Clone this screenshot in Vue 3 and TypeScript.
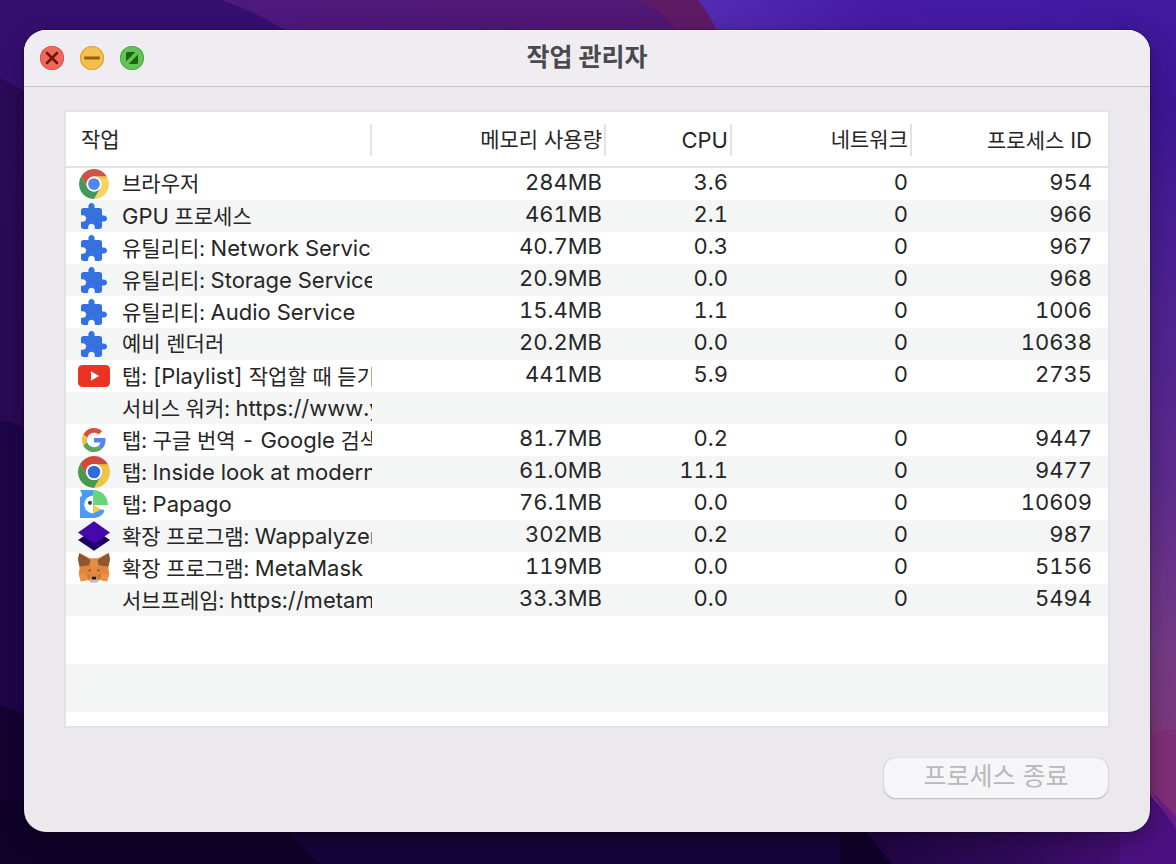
<script setup lang="ts">
type IconName = 'chrome' | 'chromeSite' | 'puzzle' | 'youtube' | 'google' | 'papago' | 'wappalyzer' | 'metamask' | ''

interface Task {
  icon: IconName
  name: string
  memory: string
  cpu: string
  network: string
  pid: string
}

interface Run {
  text: string
  latin: boolean
}

const tasks: Task[] = [
  { icon: 'chrome', name: '브라우저', memory: '284MB', cpu: '3.6', network: '0', pid: '954' },
  { icon: 'puzzle', name: 'GPU 프로세스', memory: '461MB', cpu: '2.1', network: '0', pid: '966' },
  { icon: 'puzzle', name: '유틸리티: Network Service', memory: '40.7MB', cpu: '0.3', network: '0', pid: '967' },
  { icon: 'puzzle', name: '유틸리티: Storage Service', memory: '20.9MB', cpu: '0.0', network: '0', pid: '968' },
  { icon: 'puzzle', name: '유틸리티: Audio Service', memory: '15.4MB', cpu: '1.1', network: '0', pid: '1006' },
  { icon: 'puzzle', name: '예비 렌더러', memory: '20.2MB', cpu: '0.0', network: '0', pid: '10638' },
  { icon: 'youtube', name: '탭: [Playlist] 작업할 때 듣기', memory: '441MB', cpu: '5.9', network: '0', pid: '2735' },
  { icon: '', name: '서비스 워커: https://www.y', memory: '', cpu: '', network: '', pid: '' },
  { icon: 'google', name: '탭: 구글 번역 - Google 검색', memory: '81.7MB', cpu: '0.2', network: '0', pid: '9447' },
  { icon: 'chromeSite', name: '탭: Inside look at modern', memory: '61.0MB', cpu: '11.1', network: '0', pid: '9477' },
  { icon: 'papago', name: '탭: Papago', memory: '76.1MB', cpu: '0.0', network: '0', pid: '10609' },
  { icon: 'wappalyzer', name: '확장 프로그램: Wappalyzer', memory: '302MB', cpu: '0.2', network: '0', pid: '987' },
  { icon: 'metamask', name: '확장 프로그램: MetaMask', memory: '119MB', cpu: '0.0', network: '0', pid: '5156' },
  { icon: '', name: '서브프레임: https://metam', memory: '33.3MB', cpu: '0.0', network: '0', pid: '5494' },
]

// Latin letters are set one step larger than Hangul so both scripts look the same size.
function runs(text: string): Run[] {
  return text
    .split(/([A-Za-z[][A-Za-z:/.\[\] ]*[A-Za-z\]])/)
    .filter((part) => part !== '')
    .map((part) => ({ text: part, latin: /^[A-Za-z[]/.test(part) }))
}
</script>

<template>
  <div class="desktop">
    <svg class="wallpaper" viewBox="0 0 1176 864" preserveAspectRatio="none" aria-hidden="true">
      <defs>
        <linearGradient id="wp-left" x1="0" y1="0" x2="0" y2="1">
          <stop offset="0" stop-color="#2b0a58" />
          <stop offset="1" stop-color="#280853" />
        </linearGradient>
        <linearGradient id="wp-right" x1="0" y1="0" x2="0" y2="1">
          <stop offset="0" stop-color="#4019a0" />
          <stop offset="0.12" stop-color="#3d1594" />
          <stop offset="0.35" stop-color="#4f2290" />
          <stop offset="0.55" stop-color="#5b2b8c" />
          <stop offset="0.75" stop-color="#743a86" />
          <stop offset="0.84" stop-color="#7b387c" />
          <stop offset="1" stop-color="#7b2e72" />
        </linearGradient>
        <linearGradient id="wp-blue" x1="0" y1="0" x2="1" y2="0">
          <stop offset="0" stop-color="#532bb2" />
          <stop offset="0.4" stop-color="#471ba4" />
          <stop offset="1" stop-color="#40199f" />
        </linearGradient>
        <linearGradient id="wp-top" x1="0" y1="0" x2="1" y2="0">
          <stop offset="0" stop-color="#4d197d" />
          <stop offset="1" stop-color="#511872" />
        </linearGradient>
        <linearGradient id="wp-bottom" x1="0" y1="0" x2="1" y2="0">
          <stop offset="0" stop-color="#1d0540" />
          <stop offset="0.5" stop-color="#2f0a57" />
          <stop offset="1" stop-color="#4d1080" />
        </linearGradient>
      </defs>
      <path d="M0 0H1176V864H0Z" fill="url(#wp-left)" />
      <path d="M0 0H320V120L60 110L0 78Z" fill="#350f6f" />
      <path d="M222 0Q260 14 284 30L340 60H700V0Z" fill="url(#wp-top)" />
      <path d="M640 0Q666 14 678 32L740 60V0Z" fill="#5f1a66" />
      <path d="M698 0Q708 12 717 30L740 80H1130V0Z" fill="url(#wp-blue)" />
      <path d="M1110 0H1176V864H1110Z" fill="url(#wp-right)" />
      <path d="M1110 738L1176 729V864H1110Z" fill="#7f2f76" />
      <path d="M0 420L60 436V740H0Z" fill="#1d0548" />
      <path d="M0 705L60 728V864H0Z" fill="#130330" />
      <path d="M0 800H1090V864H0Z" fill="#10032a" />
      <path d="M250 800L320 864H840V800Z" fill="#16043a" />
      <path d="M840 800H1130L1176 840V864H892Z" fill="url(#wp-bottom)" />
      <path d="M1120 760L1176 825V864H1120Z" fill="#4b1080" />
      <path d="M1150 790L1176 816V829Z" fill="#6a1b8a" />
    </svg>

    <main class="window">
      <header class="titlebar">
        <div class="lights">
          <button type="button" class="light red" aria-label="닫기">
            <svg viewBox="0 0 24 24"><path d="M7 7L17 17M17 7L7 17" stroke="#7a120b" stroke-width="2.6" stroke-linecap="round" /></svg>
          </button>
          <button type="button" class="light yellow" aria-label="최소화">
            <svg viewBox="0 0 24 24"><path d="M5.4 12H18.6" stroke="#955f12" stroke-width="2.8" stroke-linecap="round" /></svg>
          </button>
          <button type="button" class="light green" aria-label="확대">
            <svg viewBox="0 0 24 24">
              <path d="M6 15.4V7.5Q6 6 7.5 6H15.4ZM8.6 18L18 8.6V16.5Q18 18 16.5 18Z" fill="#1e640f" />
            </svg>
          </button>
        </div>
        <h1>작업 관리자</h1>
      </header>

      <section class="content">
        <div class="list">
          <table>
            <colgroup>
              <col />
              <col class="col-memory" />
              <col class="col-cpu" />
              <col class="col-network" />
              <col class="col-pid" />
            </colgroup>
            <thead>
              <tr>
                <th scope="col"><span class="heading">작업</span></th>
                <th scope="col"><span class="heading">메모리 사용량</span></th>
                <th scope="col"><span class="heading latin">CPU</span></th>
                <th scope="col"><span class="heading">네트워크</span></th>
                <th scope="col"><span class="heading">프로세스 <span class="latin">ID</span></span></th>
              </tr>
            </thead>
            <tbody>
              <tr v-for="task in tasks" :key="task.name">
                <td>
                  <div class="task">
                    <span class="icon">
                      <svg
                        v-if="task.icon === 'chrome' || task.icon === 'chromeSite'"
                        :viewBox="task.icon === 'chrome' ? '-1.6 -1.6 51.2 51.2' : '0 0 48 48'"
                      >
                        <path d="M24 12H44.78A24 24 0 0 0 3.22 12L13.61 30A12 12 0 0 1 24 12Z" :fill="task.icon === 'chrome' ? '#cf5246' : '#cd4a3d'" />
                        <path d="M34.39 30L24 48A24 24 0 0 0 44.78 12H24A12 12 0 0 1 34.39 30Z" :fill="task.icon === 'chrome' ? '#f9d35e' : '#f1c445'" />
                        <path d="M13.61 30L3.22 12A24 24 0 0 0 24 48L34.39 30A12 12 0 0 1 13.61 30Z" :fill="task.icon === 'chrome' ? '#42995a' : '#479a4c'" />
                        <path d="M24 12H44.78L43.6 14.6L30 14Z" fill="#c9952f" opacity="0.5" />
                        <circle cx="24" cy="24" r="12" fill="#fff" />
                        <circle cx="24" cy="24" r="9.4" :fill="task.icon === 'chrome' ? '#5486ec' : '#2f6bdc'" />
                      </svg>
                      <svg v-else-if="task.icon === 'puzzle'" viewBox="-0.4 -1.4 25.8 25.8">
                        <path
                          fill="#3671e0"
                          d="M20.5 11H19V7c0-1.1-.9-2-2-2h-4V3.5C13 2.12 11.88 1 10.5 1S8 2.12 8 3.5V5H4c-1.1 0-1.99.9-1.99 2v3.8H3.5c1.49 0 2.7 1.21 2.7 2.7s-1.21 2.7-2.7 2.7H2V20c0 1.1.9 2 2 2h3.8v-1.5c0-1.49 1.21-2.7 2.7-2.7s2.7 1.21 2.7 2.7V22H17c1.1 0 2-.9 2-2v-4h1.5c1.38 0 2.5-1.12 2.5-2.5S21.88 11 20.5 11z"
                        />
                      </svg>
                      <svg v-else-if="task.icon === 'youtube'" viewBox="0 0 32 32">
                        <rect x="0" y="5" width="32" height="22" rx="4.5" fill="#ea3323" />
                        <path d="M13 11.2L21 16L13 20.8Z" fill="#fff" />
                      </svg>
                      <svg v-else-if="task.icon === 'google'" viewBox="-8 -8 64 64">
                        <circle cx="24" cy="24" r="31" fill="#fff" />
                        <path fill="#d94f3f" d="M24 9.5c3.54 0 6.71 1.22 9.21 3.6l6.85-6.85C35.9 2.38 30.47 0 24 0 14.62 0 6.51 5.38 2.56 13.22l7.98 6.19C12.43 13.72 17.74 9.5 24 9.5z" />
                        <path fill="#5384ec" d="M46.98 24.55c0-1.57-.15-3.09-.38-4.55H24v9.02h12.94c-.58 2.96-2.26 5.48-4.78 7.18l7.73 6c4.51-4.18 7.09-10.36 7.09-17.65z" />
                        <path fill="#f2bd42" d="M10.53 28.59c-.48-1.45-.76-2.99-.76-4.59s.27-3.14.76-4.59l-7.98-6.19C.92 16.46 0 20.12 0 24c0 3.88.92 7.54 2.56 10.78l7.97-6.19z" />
                        <path fill="#58a55c" d="M24 48c6.48 0 11.93-2.13 15.89-5.81l-7.73-6c-2.15 1.45-4.92 2.3-8.16 2.3-6.26 0-11.57-4.22-13.47-9.91l-7.98 6.19C6.51 42.62 14.62 48 24 48z" />
                      </svg>
                      <svg v-else-if="task.icon === 'papago'" viewBox="0 0 32 32">
                        <path d="M2 2H15.5V30H2V9Q6 8 2 2Z" fill="#499bf7" />
                        <path d="M15 2V30C20.5 30 25 27 26.5 22.4L15 16Z" fill="#499bf7" />
                        <path d="M15.2 7.5A9 9 0 0 0 15.2 25.5Z" fill="#fff" />
                        <path d="M15.2 2C23.4 2 30 8.6 30 17H15.2Z" fill="#69d57b" />
                        <path d="M15.2 17H30Q28 18.7 23.4 21.8L15.2 17Z" fill="#fff" />
                        <path d="M15.2 17L23.2 21.2L15.2 25.5Z" fill="#f4cd4b" />
                        <circle cx="12" cy="14.8" r="2.1" fill="#36435c" />
                      </svg>
                      <svg v-else-if="task.icon === 'wappalyzer'" viewBox="0 0 32 32">
                        <path d="M0 20L16 9.2L32 20L16 30.8Z" fill="#1c0069" />
                        <path d="M0 12.6L16 1.2L32 12.6L16 24Z" fill="#4608ac" />
                      </svg>
                      <svg v-else-if="task.icon === 'metamask'" viewBox="0 0 32 32">
                        <path d="M1.4 1L12 6.2H20L30.6 1L32 7L30.6 15L29.6 17L31.4 22L29 29.6L21.8 27.8L18.6 30.6H13.4L10.2 27.8L3 29.6L.8 22L2.4 17L1.4 15L0 7Z" fill="#e2873d" />
                        <path d="M1.4 1L12.6 8.2L10.8 13.4L1.8 14.8L0 7ZM30.6 1L19.4 8.2L21.2 13.4L30.2 14.8L32 7Z" fill="#8d562f" />
                        <path d="M1.8 14.8L10.8 13.4L7.4 18.5L.8 22ZM30.2 14.8L21.2 13.4L24.6 18.5L31.2 22Z" fill="#e2853a" />
                        <path d="M.8 22H8.6L10.2 27.8L3 29.6ZM31.2 22H23.4L21.8 27.8L29 29.6Z" fill="#ed9147" />
                        <path d="M8.6 22L12.6 23.6L10.2 27.8ZM23.4 22L19.4 23.6L21.8 27.8Z" fill="#cf7236" />
                        <path d="M12.6 8.2H19.4L18 22H14Z" fill="#e58c48" />
                        <path d="M9.8 18.2L12.2 17.4L12.8 19.4ZM22.2 18.2L19.8 17.4L19.2 19.4Z" fill="#573a36" />
                        <path d="M11.6 28L13.4 26H18.6L20.4 28L18.4 30.4H13.6Z" fill="#cdbdb0" />
                        <path d="M14 24.8H18L18.4 27.6H13.6Z" fill="#171a20" />
                      </svg>
                    </span>
                    <span class="name"><span v-for="(run, i) in runs(task.name)" :key="i" :class="{ latin: run.latin }">{{ run.text }}</span></span>
                  </div>
                </td>
                <td>{{ task.memory }}</td>
                <td>{{ task.cpu }}</td>
                <td>{{ task.network }}</td>
                <td>{{ task.pid }}</td>
              </tr>
            </tbody>
          </table>
          <div class="empty-rows"></div>
        </div>
        <footer class="actions">
          <button type="button" class="end-process" disabled>프로세스 종료</button>
        </footer>
      </section>
    </main>
  </div>
</template>

<style>
body {
  margin: 0;
}
</style>

<style scoped>
.desktop {
  position: relative;
  display: flex;
  box-sizing: border-box;
  min-height: 100vh;
  padding: 30px 26px 32px 24px;
  overflow: hidden;
  font-family: Inter, "Noto Sans CJK KR", sans-serif;
  color: #262626;
}

.wallpaper {
  position: absolute;
  inset: 0;
  width: 100%;
  height: 100%;
}

.window {
  position: relative;
  display: flex;
  flex: 1;
  flex-direction: column;
  min-width: 0;
  overflow: hidden;
  border-radius: 22px;
  background: #ebe9ed;
  box-shadow: 0 0 2px rgba(0, 0, 0, 0.6), 0 8px 24px rgba(0, 0, 0, 0.3);
}

.titlebar {
  display: grid;
  grid-template-columns: 1fr auto 1fr;
  align-items: center;
  height: 56px;
  padding: 0 16px;
  border-bottom: 1px solid #c6c4c8;
  background: #f0edf2;
  box-shadow: inset 0 1px #faf9fb;
}

.lights {
  display: flex;
  gap: 16px;
}

.light {
  box-sizing: border-box;
  width: 24px;
  height: 24px;
  padding: 0;
  border: 0;
  border-radius: 50%;
}

.light svg {
  display: block;
  width: 24px;
  height: 24px;
  fill: none;
}

.red {
  background: #ed6a5e;
  box-shadow: inset 0 0 0 1px #d9564b;
}

.yellow {
  background: #f5bf4f;
  box-shadow: inset 0 0 0 1px #d8a13c;
}

.green {
  background: #61c554;
  box-shadow: inset 0 0 0 1px #4fac42;
}

h1 {
  margin: 0;
  padding-bottom: 2px;
  font-size: 25px;
  font-weight: 700;
  line-height: 32px;
  color: #4b494c;
}

.content {
  display: flex;
  flex: 1;
  flex-direction: column;
  gap: 30px;
  padding: 23px 40px 34px;
}

.list {
  display: flex;
  flex: 1;
  flex-direction: column;
  border: 2px solid #e3e3e3;
  background: #fff;
}

table {
  width: 100%;
  table-layout: fixed;
  border-collapse: separate;
  border-spacing: 0;
}

.col-memory {
  width: 234px;
}

.col-cpu {
  width: 126px;
}

.col-network {
  width: 180px;
}

.col-pid {
  width: 196px;
}

th {
  height: 52px;
  padding: 2px 0 0;
  border-bottom: 2px solid #e3e3e3;
  font-size: 21px;
  font-weight: 400;
  text-align: right;
}

.latin {
  font-size: 22px;
}

.heading {
  display: block;
  height: 32px;
  padding-right: 2px;
  border-right: 2px solid #e3e3e3;
  line-height: 32px;
  white-space: nowrap;
}

th:first-child .heading {
  padding-left: 15px;
  text-align: left;
}

th:last-child .heading {
  padding-right: 16px;
  border-right: 0;
}

td {
  height: 28px;
  padding: 0 4px 4px 0;
  font-size: 22px;
  font-variant-numeric: tabular-nums;
  line-height: 28px;
  text-align: right;
}

td:first-child {
  height: 32px;
  padding: 0;
}

td:last-child {
  padding-right: 16px;
}

tbody tr:nth-child(even) {
  background: #f4f5f5;
}

.task {
  display: flex;
  gap: 12px;
  height: 32px;
  padding-left: 12px;
  overflow: hidden;
}

.icon,
.icon svg {
  display: block;
  flex: none;
  width: 32px;
  height: 32px;
}

.name {
  overflow: hidden;
  font-size: 21px;
  line-height: 32px;
  white-space: pre;
}

.empty-rows {
  flex: 1;
  min-height: 110px;
  background: repeating-linear-gradient(#fff 0 48px, #f4f5f5 48px 96px);
}

.actions {
  display: flex;
  justify-content: flex-end;
  padding-right: 2px;
}

.end-process {
  width: 224px;
  height: 40px;
  padding: 0 0 4px;
  border: 0;
  border-radius: 12px;
  background: #f6f5f8;
  box-shadow: 0 0 1px rgba(0, 0, 0, 0.25), 0 1px 2px rgba(0, 0, 0, 0.2);
  font: inherit;
  font-size: 25px;
  line-height: 36px;
  color: #b9b8ba;
}
</style>
